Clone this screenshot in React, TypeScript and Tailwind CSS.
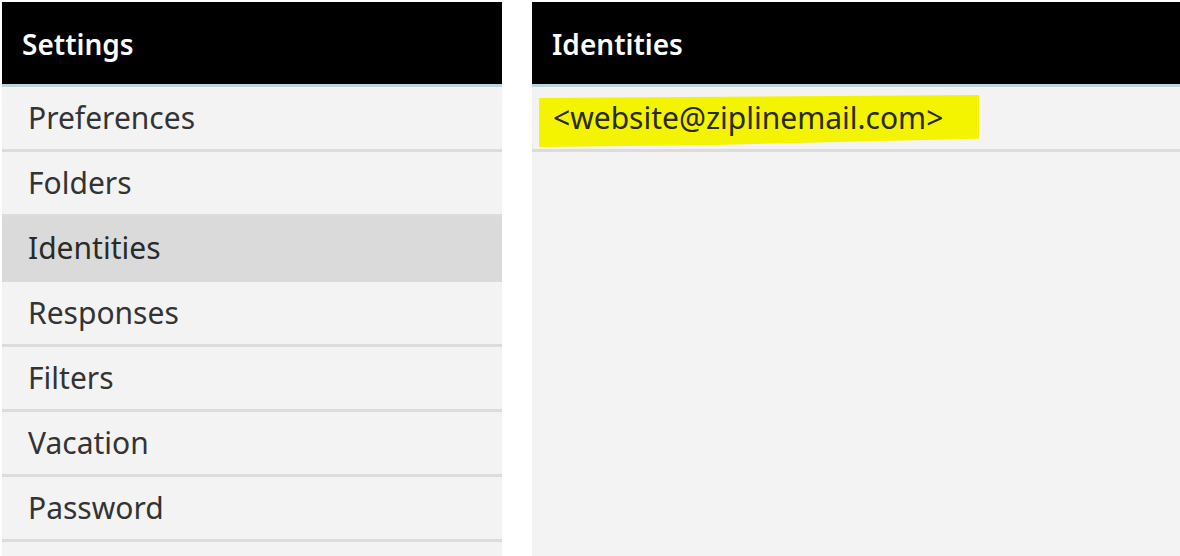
import React from 'react';

const items = ['Preferences', 'Folders', 'Identities', 'Responses', 'Filters', 'Vacation', 'Password'];

export default function App() {
  const selected = 'Identities';

  return (
    <div
      className="h-[556px] w-[1180px] overflow-hidden bg-white pt-[2px] pl-[2px] flex gap-[30px]"
      style={{ fontFamily: '"Noto Sans", "Open Sans", sans-serif' }}
    >
      {/* Settings menu */}
      <div className="w-[500px] h-full bg-[#f3f3f3] flex flex-col">
        <div className="h-[85px] shrink-0 bg-black border-b-[3px] border-[#bcd4dc] flex items-center px-[20px] pt-[2px]">
          <h1 className="text-[28px] font-semibold text-white leading-none">Settings</h1>
        </div>
        {items.map((item) => (
          <div
            key={item}
            className={
              item === selected
                ? 'h-[65px] shrink-0 border-b-[3px] border-[#dadada] bg-[#dadada] flex items-center pl-[26px]'
                : 'h-[65px] shrink-0 border-b-[3px] border-[#dcdcdc] flex items-center pl-[26px]'
            }
          >
            <span
              className={
                item === selected
                  ? 'text-[30px] font-[450] text-[#2a2a2a] leading-none'
                  : 'text-[30px] text-[#333333] leading-none'
              }
            >
              {item}
            </span>
          </div>
        ))}
      </div>

      {/* Identities list */}
      <div className="flex-1 h-full bg-[#f3f3f3] flex flex-col">
        <div className="h-[85px] shrink-0 bg-black border-b-[3px] border-[#bcd4dc] flex items-center px-[20px] pt-[2px]">
          <h2 className="text-[28px] font-semibold text-white leading-none">Identities</h2>
        </div>
        <div className="h-[65px] shrink-0 border-b-[3px] border-[#dcdcdc] flex items-center pl-[7px]">
          <span className="h-[52px] w-[440px] bg-[#f4f400] flex items-center pl-[14px] mt-[6px] [clip-path:polygon(0_6%,100%_0,100%_84%,40%_96%,0_100%)]">
            <span className="text-[30px] text-[#2a2a10] leading-none -mt-[6px]">&lt;website@ziplinemail.com&gt;</span>
          </span>
        </div>
      </div>
    </div>
  );
}
